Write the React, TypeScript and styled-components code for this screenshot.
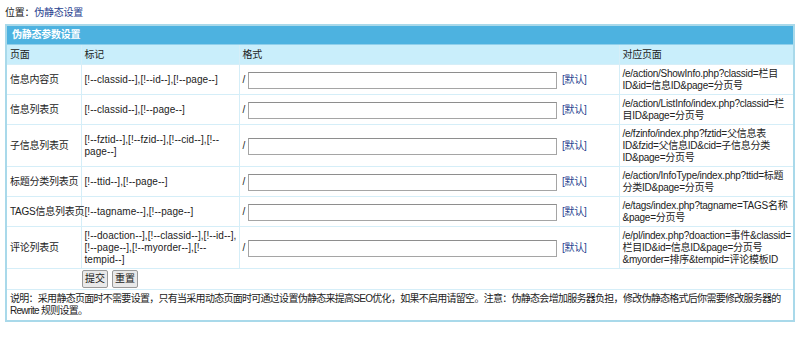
import styled, { createGlobalStyle } from "styled-components";

const GlobalStyle = createGlobalStyle`
  body {
    margin: 0;
    background: #ffffff;
    font-family: "Liberation Sans", "Noto Sans CJK SC", sans-serif;
    font-size: 10px;
    letter-spacing: -0.25px;
    text-autospace: no-autospace;
    color: #222222;
  }
`;

const Page = styled.div`
  padding: 5px 5px 0 5px;
  width: 790px;
`;

const Location = styled.div`
  height: 16px;
  line-height: 16px;
  margin-bottom: 3px;
`;

const NavLink = styled.a`
  color: #1f3f8f;
  text-decoration: none;
`;

const Table = styled.table`
  width: 790px;
  border-collapse: collapse;
  table-layout: fixed;
  border: 2px solid #a9d9ea;
  line-height: 12px;
`;

const TitleCell = styled.th`
  background: #4db2e0;
  color: #ffffff;
  font-weight: bold;
  text-align: left;
  height: 18px;
  padding: 0 5px;
  border-top: 1px solid #8fcfeb;
  border-bottom: 1px solid #8fcfeb;
`;

const HeadCell = styled.td<{ $first?: boolean }>`
  background: #c9eefb;
  height: 19px;
  padding: 0 2px 0 3px;
  border-left: ${({ $first }) => ($first ? "none" : "1px solid #d5eef8")};
`;

const Cell = styled.td<{ $first?: boolean }>`
  padding: 3px 2px 2px 3px;
  border-top: 1px solid #d5eef8;
  border-left: ${({ $first }) => ($first ? "none" : "1px solid #d5eef8")};
  vertical-align: middle;
  white-space: ${({ $first }) => ($first ? "nowrap" : "normal")};
`;

const TagCell = styled(Cell)`
  letter-spacing: 0.06px;
`;

const FormatCell = styled(Cell)`
  white-space: nowrap;
`;

const Slash = styled.span`
  margin-right: 3px;
`;

const TextInput = styled.input`
  box-sizing: border-box;
  width: 309px;
  height: 17px;
  margin: 0;
  padding: 0 2px;
  border: 1px solid #a5a5a5;
  border-top-color: #8e8e8e;
  vertical-align: middle;
  font: inherit;
`;

const DefaultLink = styled.a`
  margin-left: 5px;
  color: #1f3f8f;
  text-decoration: none;
  vertical-align: middle;
`;

const ButtonCell = styled.td`
  padding: 1px;
  border-top: 1px solid #d5eef8;
  height: 18px;
`;

const Button = styled.button`
  font: inherit;
  height: 18px;
  padding: 0 2px;
  margin-right: 4px;
  background: #e9e9e9;
  border: 1px solid #9a9a9a;
  border-radius: 2px;
  color: #222222;
  line-height: 14px;
`;

const NoteCell = styled.td`
  padding: 3px 1px 3px 3px;
  border-top: 1px solid #d5eef8;
  line-height: 12px;
  letter-spacing: -0.72px;
`;

type Row = { page: string; tags: string; target: string };

const rows: Row[] = [
  {
    page: "信息内容页",
    tags: "[!--classid--],[!--id--],[!--page--]",
    target: "/e/action/ShowInfo.php?classid=栏目ID&id=信息ID&page=分页号",
  },
  {
    page: "信息列表页",
    tags: "[!--classid--],[!--page--]",
    target: "/e/action/ListInfo/index.php?classid=栏目ID&page=分页号",
  },
  {
    page: "子信息列表页",
    tags: "[!--fztid--],[!--fzid--],[!--cid--],[!--page--]",
    target: "/e/fzinfo/index.php?fztid=父信息表ID&fzid=父信息ID&cid=子信息分类ID&page=分页号",
  },
  {
    page: "标题分类列表页",
    tags: "[!--ttid--],[!--page--]",
    target: "/e/action/InfoType/index.php?ttid=标题分类ID&page=分页号",
  },
  {
    page: "TAGS信息列表页",
    tags: "[!--tagname--],[!--page--]",
    target: "/e/tags/index.php?tagname=TAGS名称&page=分页号",
  },
  {
    page: "评论列表页",
    tags: "[!--doaction--],[!--classid--],[!--id--],[!--page--],[!--myorder--],[!--tempid--]",
    target: "/e/pl/index.php?doaction=事件&classid=栏目ID&id=信息ID&page=分页号&myorder=排序&tempid=评论模板ID",
  },
];

export default function App() {
  return (
    <Page>
      <GlobalStyle />
      <Location>
        位置：<NavLink href="#">伪静态设置</NavLink>
      </Location>
      <Table>
        <colgroup>
          <col style={{ width: 75 }} />
          <col style={{ width: 158 }} />
          <col style={{ width: 380 }} />
          <col />
        </colgroup>
        <thead>
          <tr>
            <TitleCell colSpan={4}>伪静态参数设置</TitleCell>
          </tr>
          <tr>
            <HeadCell $first>页面</HeadCell>
            <HeadCell>标记</HeadCell>
            <HeadCell>格式</HeadCell>
            <HeadCell>对应页面</HeadCell>
          </tr>
        </thead>
        <tbody>
          {rows.map((r) => (
            <tr key={r.page}>
              <Cell $first>{r.page}</Cell>
              <TagCell>{r.tags}</TagCell>
              <FormatCell>
                <Slash>/</Slash>
                <TextInput type="text" />
                <DefaultLink href="#">[默认]</DefaultLink>
              </FormatCell>
              <Cell>{r.target}</Cell>
            </tr>
          ))}
          <tr>
            <ButtonCell />
            <ButtonCell colSpan={3}>
              <Button type="button">提交</Button>
              <Button type="button">重置</Button>
            </ButtonCell>
          </tr>
          <tr>
            <NoteCell colSpan={4}>
              说明：采用静态页面时不需要设置，只有当采用动态页面时可通过设置伪静态来提高SEO优化，如果不启用请留空。注意：伪静态会增加服务器负担，修改伪静态格式后你需要修改服务器的Rewrite 规则设置。
            </NoteCell>
          </tr>
        </tbody>
      </Table>
    </Page>
  );
}
